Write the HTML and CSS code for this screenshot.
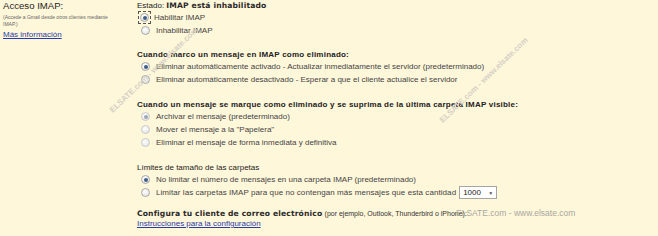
FILE: index.html
```html
<!DOCTYPE html>
<html lang="es">
<head>
<meta charset="utf-8">
<title>IMAP</title>
<link rel="stylesheet" href="styles.css">
</head>
<body>
<div class="page">
  <div class="left">
    <div class="label">Acceso IMAP:</div>
    <div class="hint">(Accede a Gmail desde otros clientes mediante IMAP.)</div>
    <a class="link more" href="#">Más información</a>
  </div>
  <div class="right">
    <div class="section s1">
      <div class="head">Estado: <b class="wide">IMAP está inhabilitado</b></div>
      <div class="row"><span class="focusbox"><span class="radio checked"></span></span><span>Habilitar IMAP</span></div>
      <div class="row"><span class="radio"></span><span>Inhabilitar IMAP</span></div>
    </div>
    <div class="section s2">
      <div class="head"><b class="tight">Cuando marco un mensaje en IMAP como eliminado:</b></div>
      <div class="row"><span class="radio checked"></span><span>Eliminar automáticamente activado - Actualizar inmediatamente el servidor (predeterminado)</span></div>
      <div class="row"><span class="radio"></span><span>Eliminar automáticamente desactivado - Esperar a que el cliente actualice el servidor</span></div>
    </div>
    <div class="section s3">
      <div class="head"><b class="tight">Cuando un mensaje se marque como eliminado y se suprima de la última carpeta IMAP visible:</b></div>
      <div class="row dim"><span class="radio checked disabled"></span><span>Archivar el mensaje (predeterminado)</span></div>
      <div class="row dim"><span class="radio disabled"></span><span>Mover el mensaje a la "Papelera"</span></div>
      <div class="row dim"><span class="radio disabled"></span><span>Eliminar el mensaje de forma inmediata y definitiva</span></div>
    </div>
    <div class="section s4">
      <div class="head">Límites de tamaño de las carpetas</div>
      <div class="row"><span class="radio checked"></span><span>No limitar el número de mensajes en una carpeta IMAP (predeterminado)</span></div>
      <div class="row"><span class="radio"></span><span class="longlabel">Limitar las carpetas IMAP para que no contengan más mensajes que esta cantidad</span><span class="select">1000<span class="arrow">▼</span></span></div>
    </div>
    <div class="section s5">
      <div class="head"><b class="wide">Configura tu cliente de correo electrónico</b> <span class="small">(por ejemplo, Outlook, Thunderbird o iPhone):</span></div>
      <a class="link" href="#">Instrucciones para la configuración</a>
    </div>
  </div>
</div>
<span class="wm wm1">ELSATE.com - www.elsate.com</span>
<span class="wm wm2">ELSATE.com - www.elsate.com</span>
<span class="wm wm3">ELSATE.com - www.elsate.com</span>
</body>
</html>
```

FILE: styles.css
```css
html, body {
  margin: 0;
  padding: 0;
  background: #fff7da;
}
body {
  width: 658px;
  height: 236px;
  overflow: hidden;
  position: relative;
  font-family: "Liberation Sans", Arial, sans-serif;
  color: #333;
}
.page {
  display: flex;
}
.left {
  width: 134px;
  padding-left: 3px;
  display: flex;
  flex-direction: column;
}
.label {
  font-size: 9.6px;
  line-height: 12px;
  color: #1e1e1e;
}
.hint {
  font-size: 5px;
  line-height: 7px;
  color: #666;
  width: 110px;
  margin-top: 2px;
}
.link {
  font-size: 8px;
  line-height: 10px;
  color: #2a3aa8;
  text-decoration: underline;
  align-self: flex-start;
}
.more {
  margin-top: 2px;
}
.right {
  display: flex;
  flex-direction: column;
  font-size: 8px;
}
.section {
  display: flex;
  flex-direction: column;
}
.s1 { margin-bottom: 12px; }
.s2 { margin-bottom: 13px; }
.s3 { margin-bottom: 13px; }
.s4 { margin-bottom: 9px; }
.head {
  line-height: 11px;
  color: #222;
  white-space: nowrap;
}
.head b {
  font-weight: bold;
}
.wide {
  font-family: "DejaVu Sans", Verdana, sans-serif;
  font-size: 7.6px;
  letter-spacing: 0.15px;
  color: #2a2a2a;
}
.tight {
  letter-spacing: 0.22px;
}
.small {
  font-size: 7px;
  color: #333;
}
.row {
  display: flex;
  align-items: center;
  height: 13px;
  color: #444;
  white-space: nowrap;
}
.longlabel {
  letter-spacing: 0.07px;
}
.focusbox {
  display: flex;
  align-items: center;
  justify-content: center;
  width: 11px;
  height: 11px;
  border: 1px dashed #555;
  margin: 0 3px 0 1px;
  flex: none;
}
.focusbox .radio {
  margin: 0;
}
.radio {
  width: 7px;
  height: 7px;
  border: 1px solid #a8a8a8;
  border-radius: 50%;
  background: radial-gradient(circle at 40% 35%, #fff 0, #e9e9e9 70%);
  margin: 0 6px 0 4px;
  position: relative;
  flex: none;
}
.radio.checked::after {
  content: "";
  position: absolute;
  left: 1.5px;
  top: 1.5px;
  width: 4px;
  height: 4px;
  border-radius: 50%;
  background: #3f5f86;
}
.radio.disabled {
  border-color: #c8c8c8;
}
.radio.disabled.checked::after {
  background: #9aa9b8;
}
.select {
  display: inline-flex;
  align-items: center;
  justify-content: space-between;
  margin-left: 3px;
  width: 30px;
  height: 11px;
  padding: 0 3px 0 3px;
  background: #fff;
  border: 1px solid #a5a5a5;
  color: #222;
  font-size: 8px;
}
.arrow {
  font-size: 5px;
  color: #555;
}
.wm {
  position: absolute;
  font-family: "Liberation Sans", Arial, sans-serif;
  font-size: 8px;
  font-weight: bold;
  color: #d4d0c4;
  white-space: nowrap;
  transform-origin: 0 0;
}
.wm1 {
  left: 108px;
  top: 108px;
  transform: rotate(-44deg);
}
.wm2 {
  left: 438px;
  top: 118px;
  transform: rotate(-44deg);
}
.wm3 {
  left: 456px;
  top: 208px;
  font-weight: normal;
  font-size: 8.5px;
  color: #a9a79f;
}
```
